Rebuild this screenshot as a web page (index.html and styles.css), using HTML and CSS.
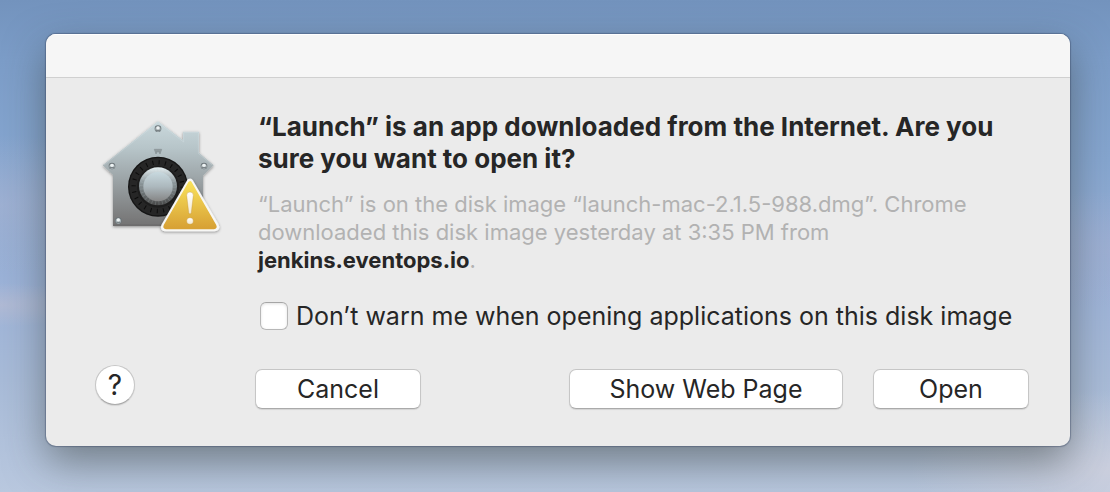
FILE: index.html
```html
<!DOCTYPE html>
<html lang="en">
<head>
<meta charset="utf-8">
<meta name="viewport" content="width=device-width, initial-scale=1">
<title>Open downloaded app</title>
<link rel="stylesheet" href="styles.css">
</head>
<body class="desktop">
<main class="dialog" role="alertdialog" aria-labelledby="dialog-title" aria-describedby="dialog-detail">
  <div class="titlebar"></div>
  <div class="content">
    <svg class="app-icon" viewBox="18 6 384 384" aria-hidden="true">
      <defs>
        <linearGradient id="house" x1="0" y1="36" x2="0" y2="348" gradientUnits="userSpaceOnUse">
          <stop offset="0" stop-color="#c9d8dc"/>
          <stop offset=".25" stop-color="#b7c5c9"/>
          <stop offset=".55" stop-color="#9ca4a7"/>
          <stop offset="1" stop-color="#737272"/>
        </linearGradient>
        <linearGradient id="knob" x1="0" y1="0" x2="0" y2="1">
          <stop offset="0" stop-color="#c8d9df"/>
          <stop offset=".5" stop-color="#acb8bd"/>
          <stop offset="1" stop-color="#858585"/>
        </linearGradient>
        <linearGradient id="rim" x1="0" y1="0" x2="0" y2="1">
          <stop offset="0" stop-color="#e6f0f3"/>
          <stop offset=".4" stop-color="#8c979b"/>
          <stop offset="1" stop-color="#474747"/>
        </linearGradient>
        <linearGradient id="warn" x1="0" y1="0" x2="0" y2="1">
          <stop offset="0" stop-color="#f8e05a"/>
          <stop offset=".5" stop-color="#e8c148"/>
          <stop offset="1" stop-color="#d8a235"/>
        </linearGradient>
        <linearGradient id="mark" x1="0" y1="0" x2="0" y2="1">
          <stop offset="0" stop-color="#fff"/>
          <stop offset="1" stop-color="#f3e9cf"/>
        </linearGradient>
        <filter id="drop" x="-10%" y="-10%" width="120%" height="125%">
          <feDropShadow dx="0" dy="3" stdDeviation="4" flood-color="#000" flood-opacity=".4"/>
        </filter>
        <g id="screw">
          <circle r="10" fill="#6b7478"/>
          <circle cy="1" r="8" fill="#a9b3b6"/>
          <circle cy="-2" r="5" fill="#edf2f3"/>
          <path d="M-6 5h12" stroke="#555c5f" stroke-width="2"/>
        </g>
      </defs>
      <path d="M204 34 279 91V65H327V128L371 166 339 197V348H69V195L38 166Z" fill="url(#house)" filter="url(#drop)"/>
      <path d="M42 165 204 37 281 96V67H325V130L367 165" fill="none" stroke="#e2ecee" stroke-width="2" opacity=".4"/>
      <path d="M70 345H338" stroke="#5f5f5f" stroke-width="3" opacity=".5"/>
      <use href="#screw" x="204" y="56"/>
      <use href="#screw" x="66" y="168"/>
      <use href="#screw" x="342" y="168"/>
      <use href="#screw" x="85" y="332"/>
      <path d="M193 118H215L210 132 204 121 198 132ZM198 125H210" fill="#929da0" stroke="#869194" stroke-width="2"/>
      <circle cx="204" cy="230" r="90" fill="#151515"/>
      <circle cx="204" cy="230" r="86" fill="#262626"/>
      <circle cx="204" cy="230" r="73" fill="none" stroke="#0c0c0c" stroke-width="13" stroke-dasharray="3 16.1"/>
      <circle cx="204" cy="230" r="63" fill="#1d1d1d"/>
      <circle cx="204" cy="229" r="57" fill="url(#rim)"/>
      <circle cx="204" cy="230" r="49" fill="none" stroke="#c4d0d3" stroke-width="12" stroke-dasharray="3 7.3" opacity=".18"/>
      <circle cx="204" cy="230" r="44" fill="url(#knob)"/>
      <g filter="url(#drop)">
        <path d="M300 216 223 349Q220 354 227 354H373Q381 354 377 348Z" fill="#f7f7f5" stroke="#f7f7f5" stroke-width="20" stroke-linejoin="round"/>
      </g>
      <path d="M300 219 226 348Q224 352 228 352H372Q376 352 374 348Z" fill="url(#warn)" stroke="url(#warn)" stroke-width="11" stroke-linejoin="round"/>
      <g fill="url(#mark)" stroke="#bb8d2d" stroke-width="1">
        <path d="M290 256Q290 246 300 246T310 256L304 307Q303 312 300 312T296 307Z"/>
        <circle cx="300" cy="333" r="10"/>
      </g>
    </svg>
    <div class="message">
      <h1 class="title" id="dialog-title">“Launch” is an app downloaded from the Internet. Are you sure you want to open it?</h1>
      <p class="detail" id="dialog-detail">“Launch” is on the disk image “launch-mac-2.1.5-988.dmg”. Chrome downloaded this disk image yesterday at 3:35 PM from <strong class="source">jenkins.eventops.io</strong>.</p>
      <div class="option">
        <input class="checkbox" type="checkbox" id="no-warning">
        <label for="no-warning">Don’t warn me when opening applications on this disk image</label>
      </div>
    </div>
    <button class="help" type="button" aria-label="Help">?</button>
    <div class="actions">
      <button class="button cancel" type="button">Cancel</button>
      <button class="button web" type="button">Show Web Page</button>
      <button class="button open" type="button">Open</button>
    </div>
  </div>
</main>
</body>
</html>
```
FILE: styles.css
```css
* {
  box-sizing: border-box;
}

.desktop {
  margin: 0;
  min-height: 100vh;
  padding: 34px 40px 46px 46px;
  background:
    radial-gradient(ellipse 90px 22px at 0 305px, rgba(188, 190, 210, .6), transparent),
    radial-gradient(ellipse 160px 70px at 0 205px, rgba(168, 180, 210, .6), transparent),
    radial-gradient(ellipse 150px 60px at 100% 250px, rgba(162, 176, 210, .6), transparent),
    radial-gradient(ellipse 200px 80px at 100% 470px, rgba(205, 208, 222, .9), transparent),
    linear-gradient(#7393bd 0, #7c9dc8 60px, #86a6d0 160px, #9db3d8 290px, #a8bbd8 380px, #b9c8df 492px);
  color: #262626;
  font-family: Inter, "Liberation Sans", sans-serif;
  font-size: 25px;
}

.dialog {
  border-radius: 10px;
  overflow: hidden;
  background: #ebebeb;
  box-shadow: 0 0 1px 1px rgba(50, 65, 95, .4), 0 16px 40px rgba(50, 55, 50, .5);
}

.titlebar {
  height: 44px;
  background: #f6f6f6;
  border-bottom: 1px solid #d0d0d0;
  box-shadow: inset 0 1px #fff;
}

.content {
  display: grid;
  grid-template-columns: 128px 1fr;
  column-gap: 32px;
  padding: 33px 41px 37px 49px;
}

.app-icon {
  width: 128px;
  height: 128px;
  margin: 1px;
}

.message {
  padding-left: 3px;
}

.title {
  margin: 0;
  font-size: 26px;
  font-weight: 700;
  line-height: 32px;
}

.detail {
  margin: 15px 0 0;
  color: #b2b2b2;
  font-size: 22px;
  line-height: 28px;
}

.source {
  color: #262626;
  font-weight: 700;
}

.option {
  display: flex;
  align-items: center;
  gap: 8px;
  margin-top: 26px;
  padding-left: 2px;
  line-height: 32px;
}

.checkbox {
  appearance: none;
  flex: none;
  width: 28px;
  height: 28px;
  margin: 0;
  border: 1px solid #b7b7b7;
  border-top-color: #a5a5a5;
  border-radius: 6px;
  background: #fff;
  box-shadow: inset 0 1px 3px rgba(0, 0, 0, .12);
}

.help,
.button {
  height: 40px;
  padding: 0;
  border: 1px solid #c6c6c6;
  border-bottom-color: #aaa;
  background: #fff;
  box-shadow: 0 1px 1px rgba(0, 0, 0, .1);
  color: inherit;
  font: inherit;
}

.help {
  width: 40px;
  margin-top: 33px;
  border-radius: 50%;
  font-size: 28px;
}

.actions {
  display: flex;
  gap: 30px;
  margin-top: 37px;
}

.button {
  border-radius: 7px;
}

.cancel {
  width: 166px;
  margin-right: auto;
}

.web {
  width: 274px;
}

.open {
  width: 156px;
}
```
